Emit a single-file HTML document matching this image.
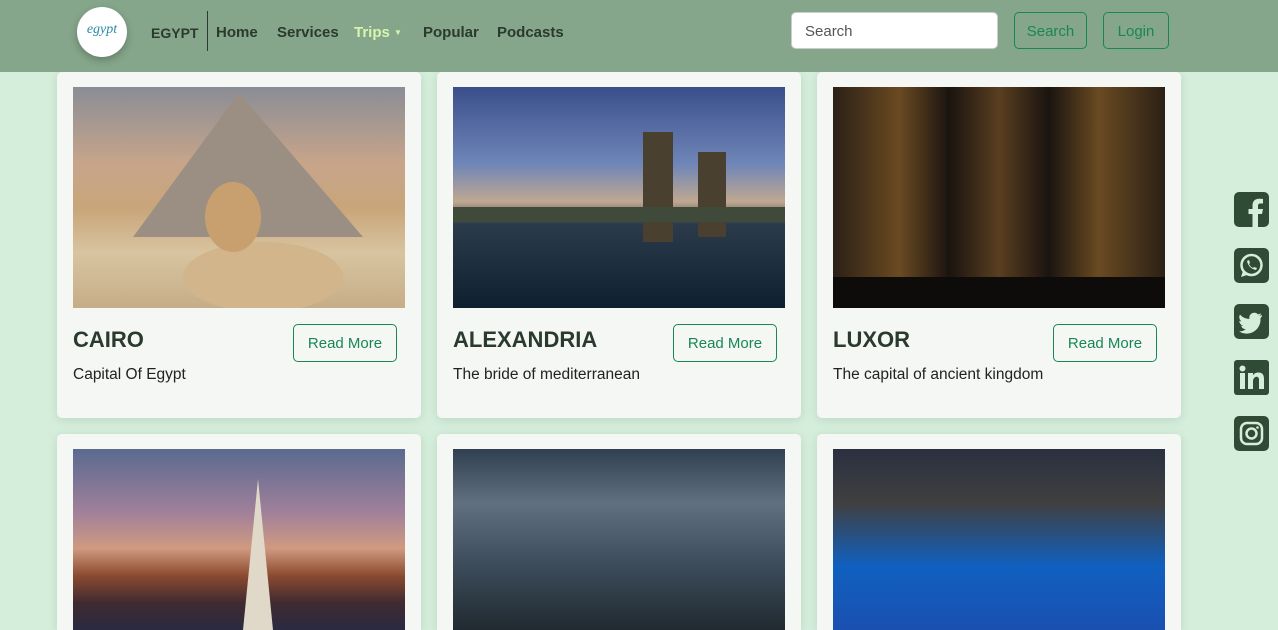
<!DOCTYPE html>
<html style="width:1278px;height:630px;overflow:hidden"><head><meta charset="utf-8"><style>
*{box-sizing:border-box;margin:0;padding:0}
body{width:1278px;height:630px;overflow:hidden;background:#d4eedb;font-family:"Liberation Sans",sans-serif;position:relative}
#wrap{position:absolute;left:0;top:0;width:1278px;height:630px;overflow:hidden}
.nav{position:absolute;left:0;top:0;width:1278px;height:72px;background:#85a68a;z-index:2}
.logo{position:absolute;left:77px;top:7px;width:50px;height:50px;border-radius:50%;background:#fff;box-shadow:0 3px 8px rgba(0,0,0,.25);color:#2a8aa8;font-family:"Liberation Serif",serif;font-style:italic;font-size:14px;text-align:center;line-height:46px}
.nl{position:absolute;top:24px;font-size:15px;font-weight:bold;color:#2b3a2e}
.sep{position:absolute;left:207px;top:11px;width:1px;height:40px;background:#2b3a2e}
.srch{position:absolute;left:791px;top:12px;width:207px;height:37px;background:#fff;border:1px solid #ccc;border-radius:5px;font-size:15px;color:#555;padding:10px 13px}
.ob{position:absolute;top:12px;height:37px;border:1px solid #198754;border-radius:5px;color:#198754;font-size:15px;text-align:center;line-height:37px}
.card{position:absolute;width:364px;height:346px;background:#f4f7f3;border-radius:5px;box-shadow:0 2px 10px rgba(0,0,0,.1)}
.img{position:absolute;left:16px;top:15px;width:332px;height:221px}
.t{position:absolute;left:16px;top:255px;font-size:22px;font-weight:bold;color:#2b3a2e}
.s{position:absolute;left:16px;top:294px;font-size:15.5px;color:#222}
.rm{position:absolute;left:236px;top:252px;width:104px;height:38px;border:1px solid #198754;border-radius:5px;color:#198754;font-size:15px;text-align:center;line-height:38px;background:#f4f7f3}
.ic{position:absolute;left:1234px;width:35px;height:35px}
</style></head><body><div id="wrap">
<div class="nav">
<div class="logo">egypt</div>
<div class="nl" style="left:151px;font-size:14px;top:25px">EGYPT</div>
<div class="sep"></div>
<div class="nl" style="left:216px">Home</div>
<div class="nl" style="left:277px">Services</div>
<div class="nl" style="left:354px;color:#d8f5b0">Trips <span style="font-size:8px;vertical-align:2px">▼</span></div>
<div class="nl" style="left:423px">Popular</div>
<div class="nl" style="left:497px">Podcasts</div>
<div class="srch">Search</div>
<div class="ob" style="left:1014px;width:73px">Search</div>
<div class="ob" style="left:1103px;width:66px">Login</div>
</div>

<div class="card" style="left:57px;top:72px"><div class="img" style="background:linear-gradient(180deg,#8a8d96 0%,#c8a58a 35%,#c9a57a 55%,#d8c4a0 75%,#c6ad88 100%)"><svg width="332" height="221"><polygon points="166,6 60,150 290,150" fill="#9a8f82"/><ellipse cx="190" cy="190" rx="80" ry="35" fill="#d2b58a"/><ellipse cx="160" cy="130" rx="28" ry="35" fill="#c8a070"/></svg></div><div class="t">CAIRO</div><div class="rm">Read More</div><div class="s">Capital Of Egypt</div></div>
<div class="card" style="left:437px;top:72px"><div class="img" style="background:linear-gradient(180deg,#3a4f8a 0%,#6f86b8 35%,#c0a890 52%,#2b3b4c 62%,#0e2030 100%)"><svg width="332" height="221"><rect x="190" y="45" width="30" height="110" fill="#4a4030"/><rect x="245" y="65" width="28" height="85" fill="#4a4030"/><rect x="0" y="120" width="332" height="15" fill="#3f4a3a"/></svg></div><div class="t">ALEXANDRIA</div><div class="rm">Read More</div><div class="s">The bride of mediterranean</div></div>
<div class="card" style="left:817px;top:72px"><div class="img" style="background:linear-gradient(90deg,#2b2015 0%,#6a4a22 20%,#1a1410 35%,#5a3e20 50%,#1a1410 65%,#6a4a22 80%,#2b2015 100%)"><svg width="332" height="221"><rect x="0" y="190" width="332" height="31" fill="#0e0c0a"/></svg></div><div class="t">LUXOR</div><div class="rm">Read More</div><div class="s">The capital of ancient kingdom</div></div>

<div class="card" style="left:57px;top:434px;height:196px;border-radius:5px 5px 0 0"><div class="img" style="height:181px;background:linear-gradient(180deg,#5a6a90 0%,#a0809a 35%,#d09a80 55%,#8a4a30 70%,#402a30 85%,#2a2a40 100%)"><svg width="332" height="181"><polygon points="185,30 170,181 200,181" fill="#e0d8c8"/></svg></div></div>
<div class="card" style="left:437px;top:434px;height:196px;border-radius:5px 5px 0 0"><div class="img" style="height:181px;background:linear-gradient(180deg,#304050 0%,#607080 30%,#405060 60%,#202a30 100%)"></div></div>
<div class="card" style="left:817px;top:434px;height:196px;border-radius:5px 5px 0 0"><div class="img" style="height:181px;background:linear-gradient(180deg,#2a3040 0%,#404040 30%,#1060c0 65%,#1a50b0 100%)"></div></div>

<svg class="ic" style="top:192px" viewBox="0 0 35 35"><rect width="35" height="35" rx="5" fill="#2f4a35"/><path d="M24 35V22h4l1-5h-5v-3c0-1.5.5-2.5 2.5-2.5H29V7c-.5 0-2-.2-4-.2-4 0-6.5 2.4-6.5 6.8V17h-4v5h4v13z" fill="#d4eedb"/></svg>
<svg class="ic" style="top:248px" viewBox="0 0 35 35"><rect width="35" height="35" rx="5" fill="#2f4a35"/><circle cx="17.5" cy="17" r="10" fill="none" stroke="#d4eedb" stroke-width="2.5"/><path d="M7 29l2-6 4 4z" fill="#d4eedb"/><path d="M13 13c1 5 4 8 9 9l1-2-3-1-1 1c-2-1-3-2-4-4l1-1-1-3z" fill="#d4eedb"/></svg>
<svg class="ic" style="top:304px" viewBox="0 0 35 35"><rect width="35" height="35" rx="5" fill="#2f4a35"/><path d="M28 11c-1 .5-2 .7-3 .8 1-.6 2-1.6 2-2.600-1 .6-2 1-3 1.2a5 5 0 0 0-8.6 4.5C11 14.7 8 13 6 10.5c-1.5 2.5-.5 5.5 1.5 6.8-.8 0-1.6-.2-2.2-.6 0 2.5 1.8 4.5 4 5-.7.2-1.5.2-2.2.1.6 2 2.5 3.4 4.7 3.5A10 10 0 0 1 5 27.4 14 14 0 0 0 26.5 15V14c1-.8 1.8-1.8 1.5-3z" fill="#d4eedb"/></svg>
<svg class="ic" style="top:360px" viewBox="0 0 35 35"><rect width="35" height="35" rx="3" fill="#2f4a35"/><rect x="6" y="13" width="5" height="16" fill="#d4eedb"/><circle cx="8.5" cy="8.5" r="3" fill="#d4eedb"/><path d="M14 13h5v2.5c1-2 3-3 5.5-3 4 0 5.5 2.5 5.5 6.5v10h-5v-9c0-2-.7-3.2-2.5-3.2S19 19 19 21v8h-5z" fill="#d4eedb"/></svg>
<svg class="ic" style="top:416px" viewBox="0 0 35 35"><rect width="35" height="35" rx="5" fill="#2f4a35"/><rect x="7" y="7" width="21" height="21" rx="6" fill="none" stroke="#d4eedb" stroke-width="2.5"/><circle cx="17.5" cy="17.5" r="5" fill="none" stroke="#d4eedb" stroke-width="2.5"/><circle cx="23.5" cy="11.5" r="1.3" fill="#d4eedb"/></svg>
</div></body></html>
